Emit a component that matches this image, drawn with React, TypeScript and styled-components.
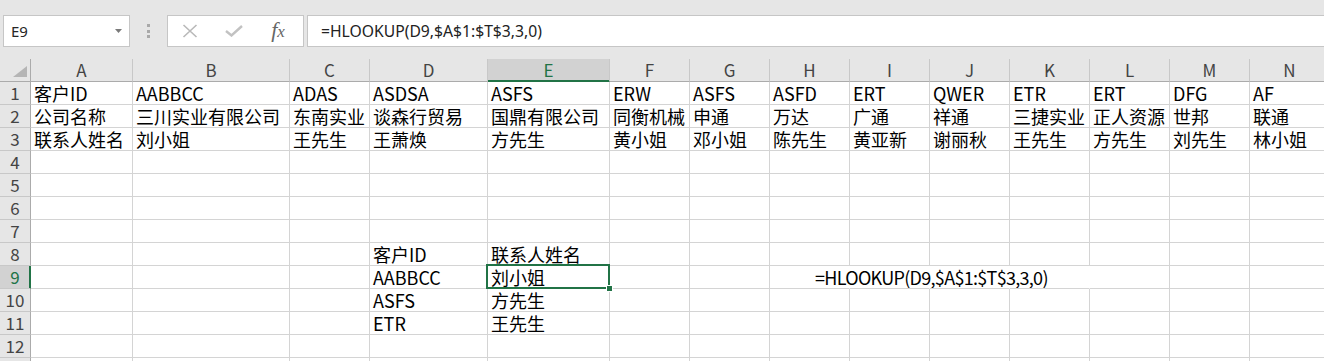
import React from "react";
import styled, { createGlobalStyle } from "styled-components";

const GREEN = "#217346";
const CELL_FONT = `"Noto Sans CJK SC", "Noto Sans", sans-serif`;
const UI_FONT = `"Noto Sans", "Noto Sans CJK SC", sans-serif`;

const GlobalStyle = createGlobalStyle`
  html, body {
    margin: 0;
    padding: 0;
    background: #fff;
    overflow: hidden;
  }
  body {
    width: 1324px;
    height: 361px;
    font-family: ${CELL_FONT};
  }
`;

const COLUMNS = [
  { key: "A", width: 102 },
  { key: "B", width: 157 },
  { key: "C", width: 80 },
  { key: "D", width: 118 },
  { key: "E", width: 122 },
  { key: "F", width: 80 },
  { key: "G", width: 80 },
  { key: "H", width: 80 },
  { key: "I", width: 80 },
  { key: "J", width: 80 },
  { key: "K", width: 80 },
  { key: "L", width: 80 },
  { key: "M", width: 80 },
  { key: "N", width: 80 },
];

const FORMULA = "=HLOOKUP(D9,$A$1:$T$3,3,0)";

// sparse sheet contents, keyed by row then column
const DATA: Record<number, Record<string, string>> = {
  1: {
    A: "客户ID", B: "AABBCC", C: "ADAS", D: "ASDSA", E: "ASFS", F: "ERW", G: "ASFS",
    H: "ASFD", I: "ERT", J: "QWER", K: "ETR", L: "ERT", M: "DFG", N: "AF",
  },
  2: {
    A: "公司名称", B: "三川实业有限公司", C: "东南实业", D: "谈森行贸易", E: "国鼎有限公司",
    F: "同衡机械", G: "申通", H: "万达", I: "广通", J: "祥通", K: "三捷实业", L: "正人资源",
    M: "世邦", N: "联通",
  },
  3: {
    A: "联系人姓名", B: "刘小姐", C: "王先生", D: "王萧焕", E: "方先生", F: "黄小姐", G: "邓小姐",
    H: "陈先生", I: "黄亚新", J: "谢丽秋", K: "王先生", L: "方先生", M: "刘先生", N: "林小姐",
  },
  8: { D: "客户ID", E: "联系人姓名" },
  9: { D: "AABBCC", E: "刘小姐", H: FORMULA },
  10: { D: "ASFS", E: "方先生" },
  11: { D: "ETR", E: "王先生" },
};

const ROWS = Array.from({ length: 13 }, (_, i) => i + 1);
const SELECTED = { row: 9, col: "E" };
// cells that the overflowing formula text covers: no gridline on their right
const SPILL = new Set(["H9", "I9", "J9", "K9"]);

export default function App() {
  return (
    <>
      <GlobalStyle />
      <Page>
        <TopBar>
          <NameBox>
            <span>E9</span>
            <svg width="7" height="4" viewBox="0 0 7 4">
              <polygon points="0,0 7,0 3.5,4" fill="#7a7a7a" />
            </svg>
          </NameBox>
          <Grip>
            <GripDot />
            <GripDot />
            <GripDot />
          </Grip>
          <FxBox>
            <FxButton>
              <svg width="16" height="14" viewBox="0 0 16 14">
                <path d="M1.5 1 L14.5 13 M14.5 1 L1.5 13" stroke="#b9b9b9" strokeWidth="1.6" fill="none" />
              </svg>
            </FxButton>
            <FxButton>
              <svg width="18" height="12" viewBox="0 0 18 12">
                <path d="M1 6 L6.5 10.5 L17 1" stroke="#c2c2c2" strokeWidth="2.4" fill="none" />
              </svg>
            </FxButton>
            <FxButton>
              <FxLabel>
                f<small>x</small>
              </FxLabel>
            </FxButton>
          </FxBox>
          <FormulaInput>{FORMULA}</FormulaInput>
        </TopBar>

        <Sheet $widths={COLUMNS.map((c) => c.width)}>
          <Corner>
            <svg width="30" height="22" viewBox="0 0 30 22">
              <polygon points="27,7 27,18 13,18" fill="#b5b5b5" />
            </svg>
          </Corner>
          {COLUMNS.map((c) => (
            <ColHeader key={c.key} $active={c.key === SELECTED.col}>
              {c.key}
            </ColHeader>
          ))}

          {ROWS.map((r) => (
            <React.Fragment key={r}>
              <RowHeader $active={r === SELECTED.row}>{r}</RowHeader>
              {COLUMNS.map((c) => {
                const id = `${c.key}${r}`;
                const value = DATA[r]?.[c.key] ?? "";
                const isSelected = r === SELECTED.row && c.key === SELECTED.col;
                return (
                  <Cell
                    key={id}
                    $spill={SPILL.has(id)}
                    $open={isSelected}
                    $formula={value.startsWith("=")}
                  >
                    {value}
                    {isSelected && (
                      <Selection>
                        <FillHandle />
                      </Selection>
                    )}
                  </Cell>
                );
              })}
            </React.Fragment>
          ))}
        </Sheet>
      </Page>
    </>
  );
}

const Page = styled.div`
  width: 1324px;
  height: 361px;
  overflow: hidden;
  background: #fff;
`;

const TopBar = styled.div`
  height: 59px;
  box-sizing: border-box;
  padding: 15px 0 0 3px;
  background: #e6e6e6;
  display: flex;
  align-items: flex-start;
`;

const NameBox = styled.div`
  width: 127px;
  height: 32px;
  box-sizing: border-box;
  padding: 0 7px 0 7px;
  background: #fff;
  border: 1px solid #c6c6c6;
  display: flex;
  align-items: center;
  justify-content: space-between;
  font-family: ${UI_FONT};
  font-size: 15px;
  color: #262626;
`;

const Grip = styled.div`
  width: 37px;
  height: 32px;
  display: flex;
  flex-direction: column;
  align-items: center;
  justify-content: center;
  gap: 2.4px;
`;

const GripDot = styled.span`
  width: 3px;
  height: 3px;
  background: #a9a9a9;
`;

const FxBox = styled.div`
  width: 137px;
  height: 32px;
  box-sizing: border-box;
  background: #fff;
  border: 1px solid #c6c6c6;
  display: flex;
  align-items: center;
`;

const FxButton = styled.div`
  width: 44px;
  height: 100%;
  display: flex;
  align-items: center;
  justify-content: center;
`;

const FxLabel = styled.span`
  font-family: "Liberation Serif", "DejaVu Serif", serif;
  font-style: italic;
  font-size: 22px;
  color: #666;
  line-height: 1;
  margin-top: -2px;

  small {
    font-size: 17px;
  }
`;

const FormulaInput = styled.div`
  flex: 1;
  height: 32px;
  box-sizing: border-box;
  margin: 0 -2px 0 3px;
  padding: 0 0 0 13px;
  background: #fff;
  border: 1px solid #c6c6c6;
  display: flex;
  align-items: center;
  font-family: ${UI_FONT};
  font-size: 15.7px;
  color: #222;
  white-space: nowrap;
`;

const Sheet = styled.div<{ $widths: number[] }>`
  display: grid;
  grid-template-columns: 31px ${({ $widths }) => $widths.map((w) => `${w}px`).join(" ")};
  grid-auto-rows: 23px;
  width: max-content;
`;

const HeaderBase = styled.div`
  box-sizing: border-box;
  background: #e6e6e6;
  display: flex;
  align-items: center;
  justify-content: center;
  font-family: ${CELL_FONT};
  font-size: 17px;
  line-height: 20px;
  color: #444;
`;

const Corner = styled(HeaderBase)`
  border-right: 1px solid #ababab;
  border-bottom: 1px solid #ababab;
  align-items: stretch;
  justify-content: flex-start;

  svg {
    display: block;
  }
`;

const ColHeader = styled(HeaderBase)<{ $active?: boolean }>`
  border-right: 1px solid #c8c8c8;
  border-bottom: 1px solid ${({ $active }) => ($active ? GREEN : "#ababab")};
  ${({ $active }) =>
    $active &&
    `
    background: #d2d2d2;
    color: ${GREEN};
    box-shadow: inset 0 -1px 0 ${GREEN};
  `}
`;

const RowHeader = styled(HeaderBase)<{ $active?: boolean }>`
  border-right: 1px solid ${({ $active }) => ($active ? GREEN : "#ababab")};
  border-bottom: 1px solid #c8c8c8;
  ${({ $active }) =>
    $active &&
    `
    background: #d2d2d2;
    color: ${GREEN};
    box-shadow: inset -1px 0 0 ${GREEN};
  `}
`;

const Cell = styled.div<{ $spill?: boolean; $open?: boolean; $formula?: boolean }>`
  position: relative;
  box-sizing: border-box;
  padding: 1px 0 0 ${({ $formula }) => ($formula ? 45 : 3)}px;
  border-right: 1px solid ${({ $spill }) => ($spill ? "transparent" : "#d4d4d4")};
  border-bottom: 1px solid #d4d4d4;
  font-size: 18px;
  line-height: 21px;
  letter-spacing: ${({ $formula }) => ($formula ? "-0.7px" : "normal")};
  color: #000;
  white-space: nowrap;
  overflow: ${({ $spill, $open }) => ($spill || $open ? "visible" : "hidden")};
`;

const Selection = styled.div`
  position: absolute;
  top: -2px;
  left: -2px;
  right: -1px;
  bottom: -1px;
  border: 2px solid ${GREEN};
  z-index: 2;
  pointer-events: none;
`;

const FillHandle = styled.div`
  position: absolute;
  right: -4px;
  bottom: -4px;
  width: 5px;
  height: 5px;
  background: ${GREEN};
  box-shadow: 0 0 0 1px #fff;
`;
